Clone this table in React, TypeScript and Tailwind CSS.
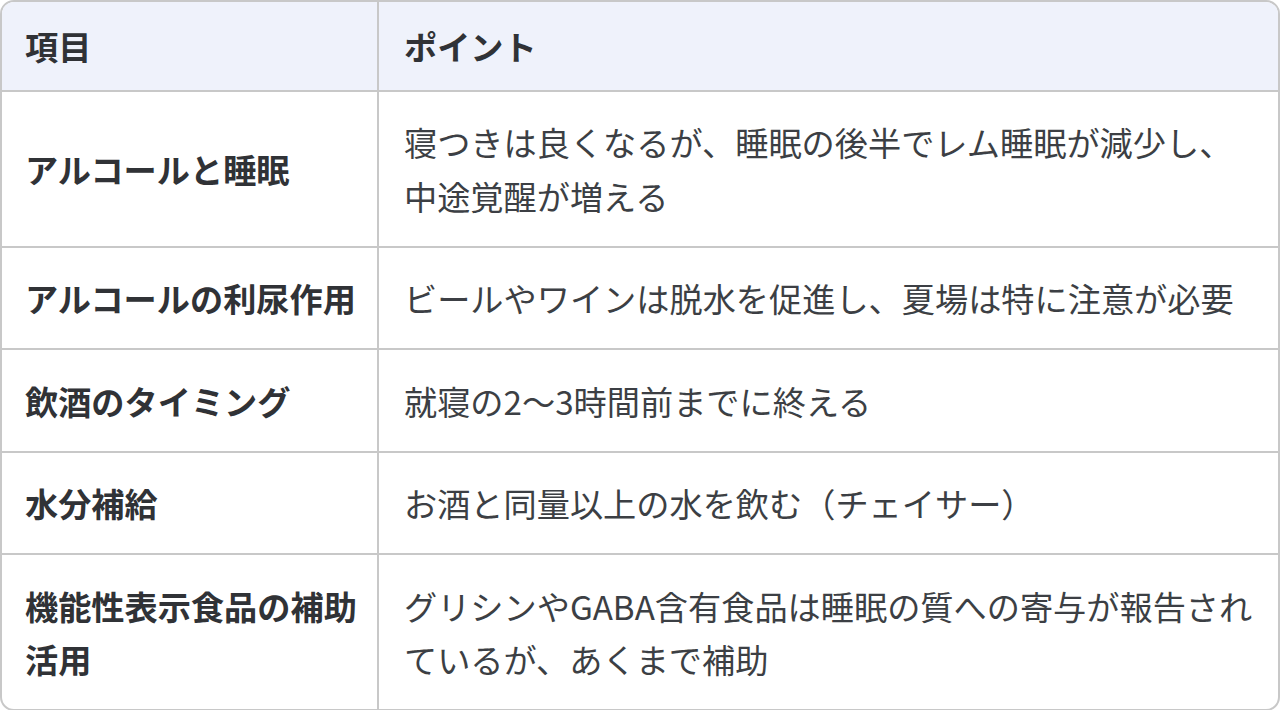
import React from "react";

const rows: { k: React.ReactNode; v: React.ReactNode }[] = [
  {
    k: "アルコールと睡眠",
    v: (
      <>
        寝つきは良くなるが、睡眠の後半でレム睡眠が減少し、
        <br />
        中途覚醒が増える
      </>
    ),
  },
  { k: "アルコールの利尿作用", v: "ビールやワインは脱水を促進し、夏場は特に注意が必要" },
  { k: "飲酒のタイミング", v: "就寝の2〜3時間前までに終える" },
  { k: "水分補給", v: "お酒と同量以上の水を飲む（チェイサー）" },
  {
    k: (
      <>
        機能性表示食品の補助
        <br />
        活用
      </>
    ),
    v: (
      <>
        グリシンやGABA含有食品は睡眠の質への寄与が報告され
        <br />
        ているが、あくまで補助
      </>
    ),
  },
];

export default function App() {
  return (
    <div
      className="w-[1280px] h-[710px] bg-white"
      style={{ fontFamily: '"Noto Sans CJK JP", "Noto Sans", sans-serif' }}
    >
      <div className="w-[1280px] border-2 border-[#c8c8c8] rounded-[14px] overflow-hidden">
        <div className="flex bg-[#eff2fb] border-b-2 border-[#c8c8c8]">
          <div className="w-[377px] shrink-0 border-r-2 border-[#c8c8c8] pl-[23px] py-[17px] text-[33.2px] leading-[53.5px] font-bold text-[#303236] whitespace-nowrap">
            項目
          </div>
          <div className="flex-1 pl-[25px] py-[17px] text-[33.2px] leading-[53.5px] font-bold text-[#303236] whitespace-nowrap">
            ポイント
          </div>
        </div>
        {rows.map((r, i) => (
          <div
            key={i}
            className={
              "flex " + (i < rows.length - 1 ? "border-b-2 border-[#c8c8c8]" : "")
            }
          >
            <div className="w-[377px] shrink-0 border-r-2 border-[#c8c8c8] pl-[23px] py-[23.5px] text-[33.2px] leading-[53.5px] font-bold text-[#303236] whitespace-nowrap flex items-center">
              <div>{r.k}</div>
            </div>
            <div className="flex-1 pl-[25px] py-[23.5px] text-[33.2px] leading-[53.5px] text-[#3c3f44] whitespace-nowrap flex items-center">
              <div>{r.v}</div>
            </div>
          </div>
        ))}
      </div>
    </div>
  );
}
